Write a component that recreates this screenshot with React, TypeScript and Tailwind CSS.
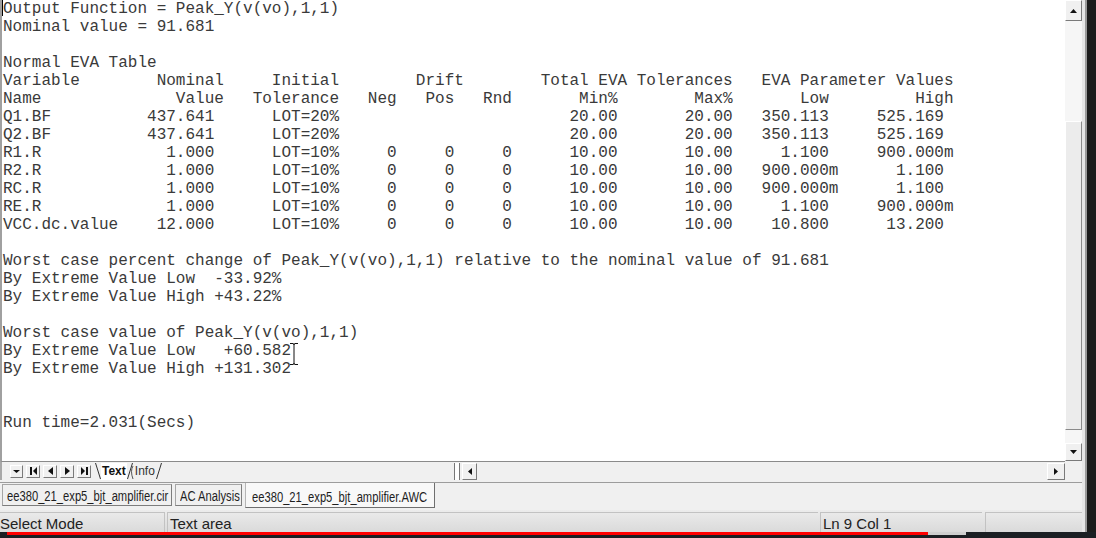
import React from "react";

// fixed-width output of the EVA run, columns are char positions
type Row = [string, string, string, boolean, string, string, string, string];

const rows: Row[] = [
  ["Q1.BF", "437.641", "LOT=20%", false, "20.00", "20.00", "350.113", "525.169"],
  ["Q2.BF", "437.641", "LOT=20%", false, "20.00", "20.00", "350.113", "525.169"],
  ["R1.R", "1.000", "LOT=10%", true, "10.00", "10.00", "1.100", "900.000m"],
  ["R2.R", "1.000", "LOT=10%", true, "10.00", "10.00", "900.000m", "1.100"],
  ["RC.R", "1.000", "LOT=10%", true, "10.00", "10.00", "900.000m", "1.100"],
  ["RE.R", "1.000", "LOT=10%", true, "10.00", "10.00", "1.100", "900.000m"],
  ["VCC.dc.value", "12.000", "LOT=10%", true, "10.00", "10.00", "10.800", "13.200"],
];

function put(buf: string[], text: string, end: number) {
  const start = end - text.length + 1;
  for (let i = 0; i < text.length; i++) buf[start + i] = text[i];
}

function numEnd(v: string, end: number) {
  return v.endsWith("m") ? end + 1 : end;
}

function tableRow(r: Row) {
  const buf = new Array(100).fill(" ");
  put(buf, r[0], r[0].length - 1);
  put(buf, r[1], 21);
  put(buf, r[2], 34);
  if (r[3]) {
    put(buf, "0", 40);
    put(buf, "0", 46);
    put(buf, "0", 52);
  }
  put(buf, r[4], 63);
  put(buf, r[5], 75);
  put(buf, r[6], numEnd(r[6], 85));
  put(buf, r[7], numEnd(r[7], 97));
  return buf.join("").trimEnd();
}

const lines = [
  "Output Function = Peak_Y(v(vo),1,1)",
  "Nominal value = 91.681",
  "",
  "Normal EVA Table",
  "Variable        Nominal     Initial        Drift        Total EVA Tolerances   EVA Parameter Values",
  "Name              Value   Tolerance   Neg   Pos   Rnd       Min%        Max%       Low         High",
  ...rows.map(tableRow),
  "",
  "Worst case percent change of Peak_Y(v(vo),1,1) relative to the nominal value of 91.681",
  "By Extreme Value Low  -33.92%",
  "By Extreme Value High +43.22%",
  "",
  "Worst case value of Peak_Y(v(vo),1,1)",
  "By Extreme Value Low   +60.582",
  "By Extreme Value High +131.302",
  "",
  "",
  "Run time=2.031(Secs)",
];

function Btn({ children, className = "" }: { children?: React.ReactNode; className?: string }) {
  return (
    <div
      className={
        "flex items-center justify-center bg-[#f0f0f0] border border-t-white border-l-white border-r-[#7a7a7a] border-b-[#7a7a7a] " +
        className
      }
    >
      {children}
    </div>
  );
}

function Tri({ dir }: { dir: "up" | "down" | "left" | "right" }) {
  const pts = {
    up: "0,4 7,4 3.5,0",
    down: "0,0 7,0 3.5,4",
    left: "4,0 4,7 0,3.5",
    right: "0,0 0,7 4,3.5",
  }[dir];
  const w = dir === "up" || dir === "down" ? 7 : 4;
  const h = dir === "up" || dir === "down" ? 4 : 7;
  return (
    <svg width={w} height={h} viewBox={`0 0 ${w} ${h}`}>
      <polygon points={pts} fill="#111" />
    </svg>
  );
}

function NavButtons() {
  return (
    <div className="flex items-center gap-[3px] ml-[8px]">
      <Btn className="w-[13px] h-[13px]">
        <svg width="7" height="3" viewBox="0 0 7 3">
          <polygon points="0,0 7,0 3.5,3" fill="#111" />
        </svg>
      </Btn>
      <Btn className="w-[14px] h-[13px]">
        <svg width="7" height="8" viewBox="0 0 7 8">
          <rect x="0" y="0" width="2" height="8" fill="#111" />
          <polygon points="7,0 7,8 3,4" fill="#111" />
        </svg>
      </Btn>
      <Btn className="w-[14px] h-[13px]">
        <svg width="5" height="8" viewBox="0 0 5 8">
          <polygon points="5,0 5,8 0,4" fill="#111" />
        </svg>
      </Btn>
      <Btn className="w-[14px] h-[13px]">
        <svg width="5" height="8" viewBox="0 0 5 8">
          <polygon points="0,0 0,8 5,4" fill="#111" />
        </svg>
      </Btn>
      <Btn className="w-[14px] h-[13px]">
        <svg width="7" height="8" viewBox="0 0 7 8">
          <polygon points="0,0 0,8 4,4" fill="#111" />
          <rect x="5" y="0" width="2" height="8" fill="#111" />
        </svg>
      </Btn>
    </div>
  );
}

function SheetTabs() {
  return (
    <div className="flex items-stretch ml-[4px] h-[17px]">
      <svg width="6" height="17" viewBox="0 0 6 17">
        <line x1="0.5" y1="0" x2="5.5" y2="16" stroke="#333" />
      </svg>
      <span className="font-['Liberation_Sans',Arial,sans-serif] text-[12px] font-bold leading-[16px] text-[#111] px-[1px] bg-white">
        Text
      </span>
      <svg width="8" height="17" viewBox="0 0 8 17">
        <line x1="0.5" y1="16" x2="5.5" y2="0" stroke="#333" />
        <path d="M6 3 Q3 8 6 16" stroke="#555" fill="none" />
      </svg>
      <span className="font-['Liberation_Sans',Arial,sans-serif] text-[12px] leading-[16px] text-[#333]">Info</span>
      <svg width="8" height="17" viewBox="0 0 8 17">
        <line x1="1.5" y1="16" x2="6.5" y2="0" stroke="#333" />
      </svg>
    </div>
  );
}

function HRow() {
  return (
    <div className="h-[19px] flex">
      <div className="w-[1065px] flex items-center border-t border-[#8a8a8a] border-l-2 border-l-[#a8a8a8]">
        <NavButtons />
        <SheetTabs />
        <div className="flex-1" />
        <div className="w-[6px] h-[17px] border-x border-[#777] bg-white mr-[2px]" />
        <Btn className="w-[15px] h-[17px]">
          <Tri dir="left" />
        </Btn>
        <div className="flex-1 max-w-[570px] min-w-[570px] h-[17px] bg-[#f0f0f0]" />
        <Btn className="w-[18px] h-[17px]">
          <Tri dir="right" />
        </Btn>
      </div>
      <div className="w-[17px] bg-[#f0f0f0]" />
    </div>
  );
}

function VScroll() {
  return (
    <div className="w-[17px] flex flex-col bg-[#f6f6f6]">
      <Btn className="h-[21px] border-t-[#9a9a9a]">
        <Tri dir="up" />
      </Btn>
      <div className="h-[100px]" />
      <div className="h-[309px] bg-[#ececec] border border-t-white border-l-white border-r-[#8a8a8a] border-b-[#8a8a8a]" />
      <div className="h-[13px]" />
      <Btn className="h-[18px]">
        <Tri dir="down" />
      </Btn>
    </div>
  );
}

function Editor() {
  return (
    <div className="h-[461px] flex">
      <div className="relative w-[1065px] bg-white border-l-2 border-[#a0a0a0] overflow-hidden">
        <pre className="font-['Liberation_Mono','Courier_New',monospace] text-[16px] leading-[18px] text-[#3a3a3a] pl-[1px]">
          {lines.join("\n")}
        </pre>
        <div className="absolute left-0 top-0 w-px h-[16px] bg-black" />
        <svg className="absolute left-[287px] top-[342px]" width="10" height="24" viewBox="0 0 10 24">
          <path d="M1 1.5 H4 Q5 1.5 5 3 V21 Q5 22.5 4 22.5 H1 M9 1.5 H6 Q5 1.5 5 3 M5 21 Q5 22.5 6 22.5 H9" stroke="#111" strokeWidth="1" fill="none" />
        </svg>
      </div>
      <VScroll />
    </div>
  );
}

const narrow = "inline-block origin-left scale-x-[0.8] whitespace-nowrap font-['Liberation_Sans',Arial,sans-serif] text-[14px] text-[#1e1e1e]";

function DocTabs() {
  return (
    <div className="h-[28px] flex items-start border-t border-[#9c9c9c] pl-[2px] gap-[3px]">
      <div className="w-[170px] h-[22px] mt-[1px] border border-[#a5a5a5] border-r-[#7d7d7d] border-b-[#7d7d7d] pl-[4px] leading-[20px] overflow-hidden">
        <span className={narrow}>ee380_21_exp5_bjt_amplifier.cir</span>
      </div>
      <div className="w-[67px] h-[22px] mt-[1px] border border-[#a5a5a5] border-r-[#7d7d7d] border-b-[#7d7d7d] pl-[4px] leading-[20px] overflow-hidden">
        <span className={narrow}>AC Analysis</span>
      </div>
      <div className="w-[190px] h-[25px] bg-[#f8f8f8] border-x border-b border-l-[#b5b5b5] border-r-[#6f6f6f] border-b-[#6f6f6f] pl-[6px] leading-[26px] overflow-hidden">
        <span className={narrow}>ee380_21_exp5_bjt_amplifier.AWC</span>
      </div>
    </div>
  );
}

function StatusBar() {
  const cell = "h-full border-t border-l border-[#c2c2c2] overflow-hidden whitespace-nowrap";
  return (
    <div className="h-[22px] flex bg-gradient-to-b from-[#ececec] to-[#dadada] font-['Liberation_Sans',Arial,sans-serif] text-[15px] leading-[21px] text-[#222] pt-[2px]">
      <div className="w-[165px] h-full border-t border-r border-[#c2c2c2] overflow-hidden whitespace-nowrap">Select Mode</div>
      <div className={cell + " w-[651px] ml-[2px] pl-[2px]"}>Text area</div>
      <div className={cell + " w-[162px] ml-[2px] pl-[2px]"}>Ln 9 Col 1</div>
      <div className={cell + " flex-1 ml-[3px]"} />
    </div>
  );
}

export default function App() {
  return (
    <div className="w-[1096px] h-[538px] flex flex-col bg-[#1b1f23] overflow-hidden">
      <div className="h-[532px] flex">
        <div className="w-[1082px] flex flex-col bg-[#f0f0f0]">
          <Editor />
          <HRow />
          <div className="h-[2px]" />
          <DocTabs />
          <StatusBar />
        </div>
        <div className="w-[5px] bg-[#e6e6e6] border-r-2 border-[#9a9a9a]" />
        <div className="flex-1 bg-[#1c1c1c]" />
      </div>
      <div className="h-[6px] flex">
        <div className="w-[7px]" />
        <div className="w-[921px] h-[3px] bg-[#ff0000]" />
        <div className="w-[38px] h-[3px] bg-[#cfcfcf]" />
      </div>
    </div>
  );
}
